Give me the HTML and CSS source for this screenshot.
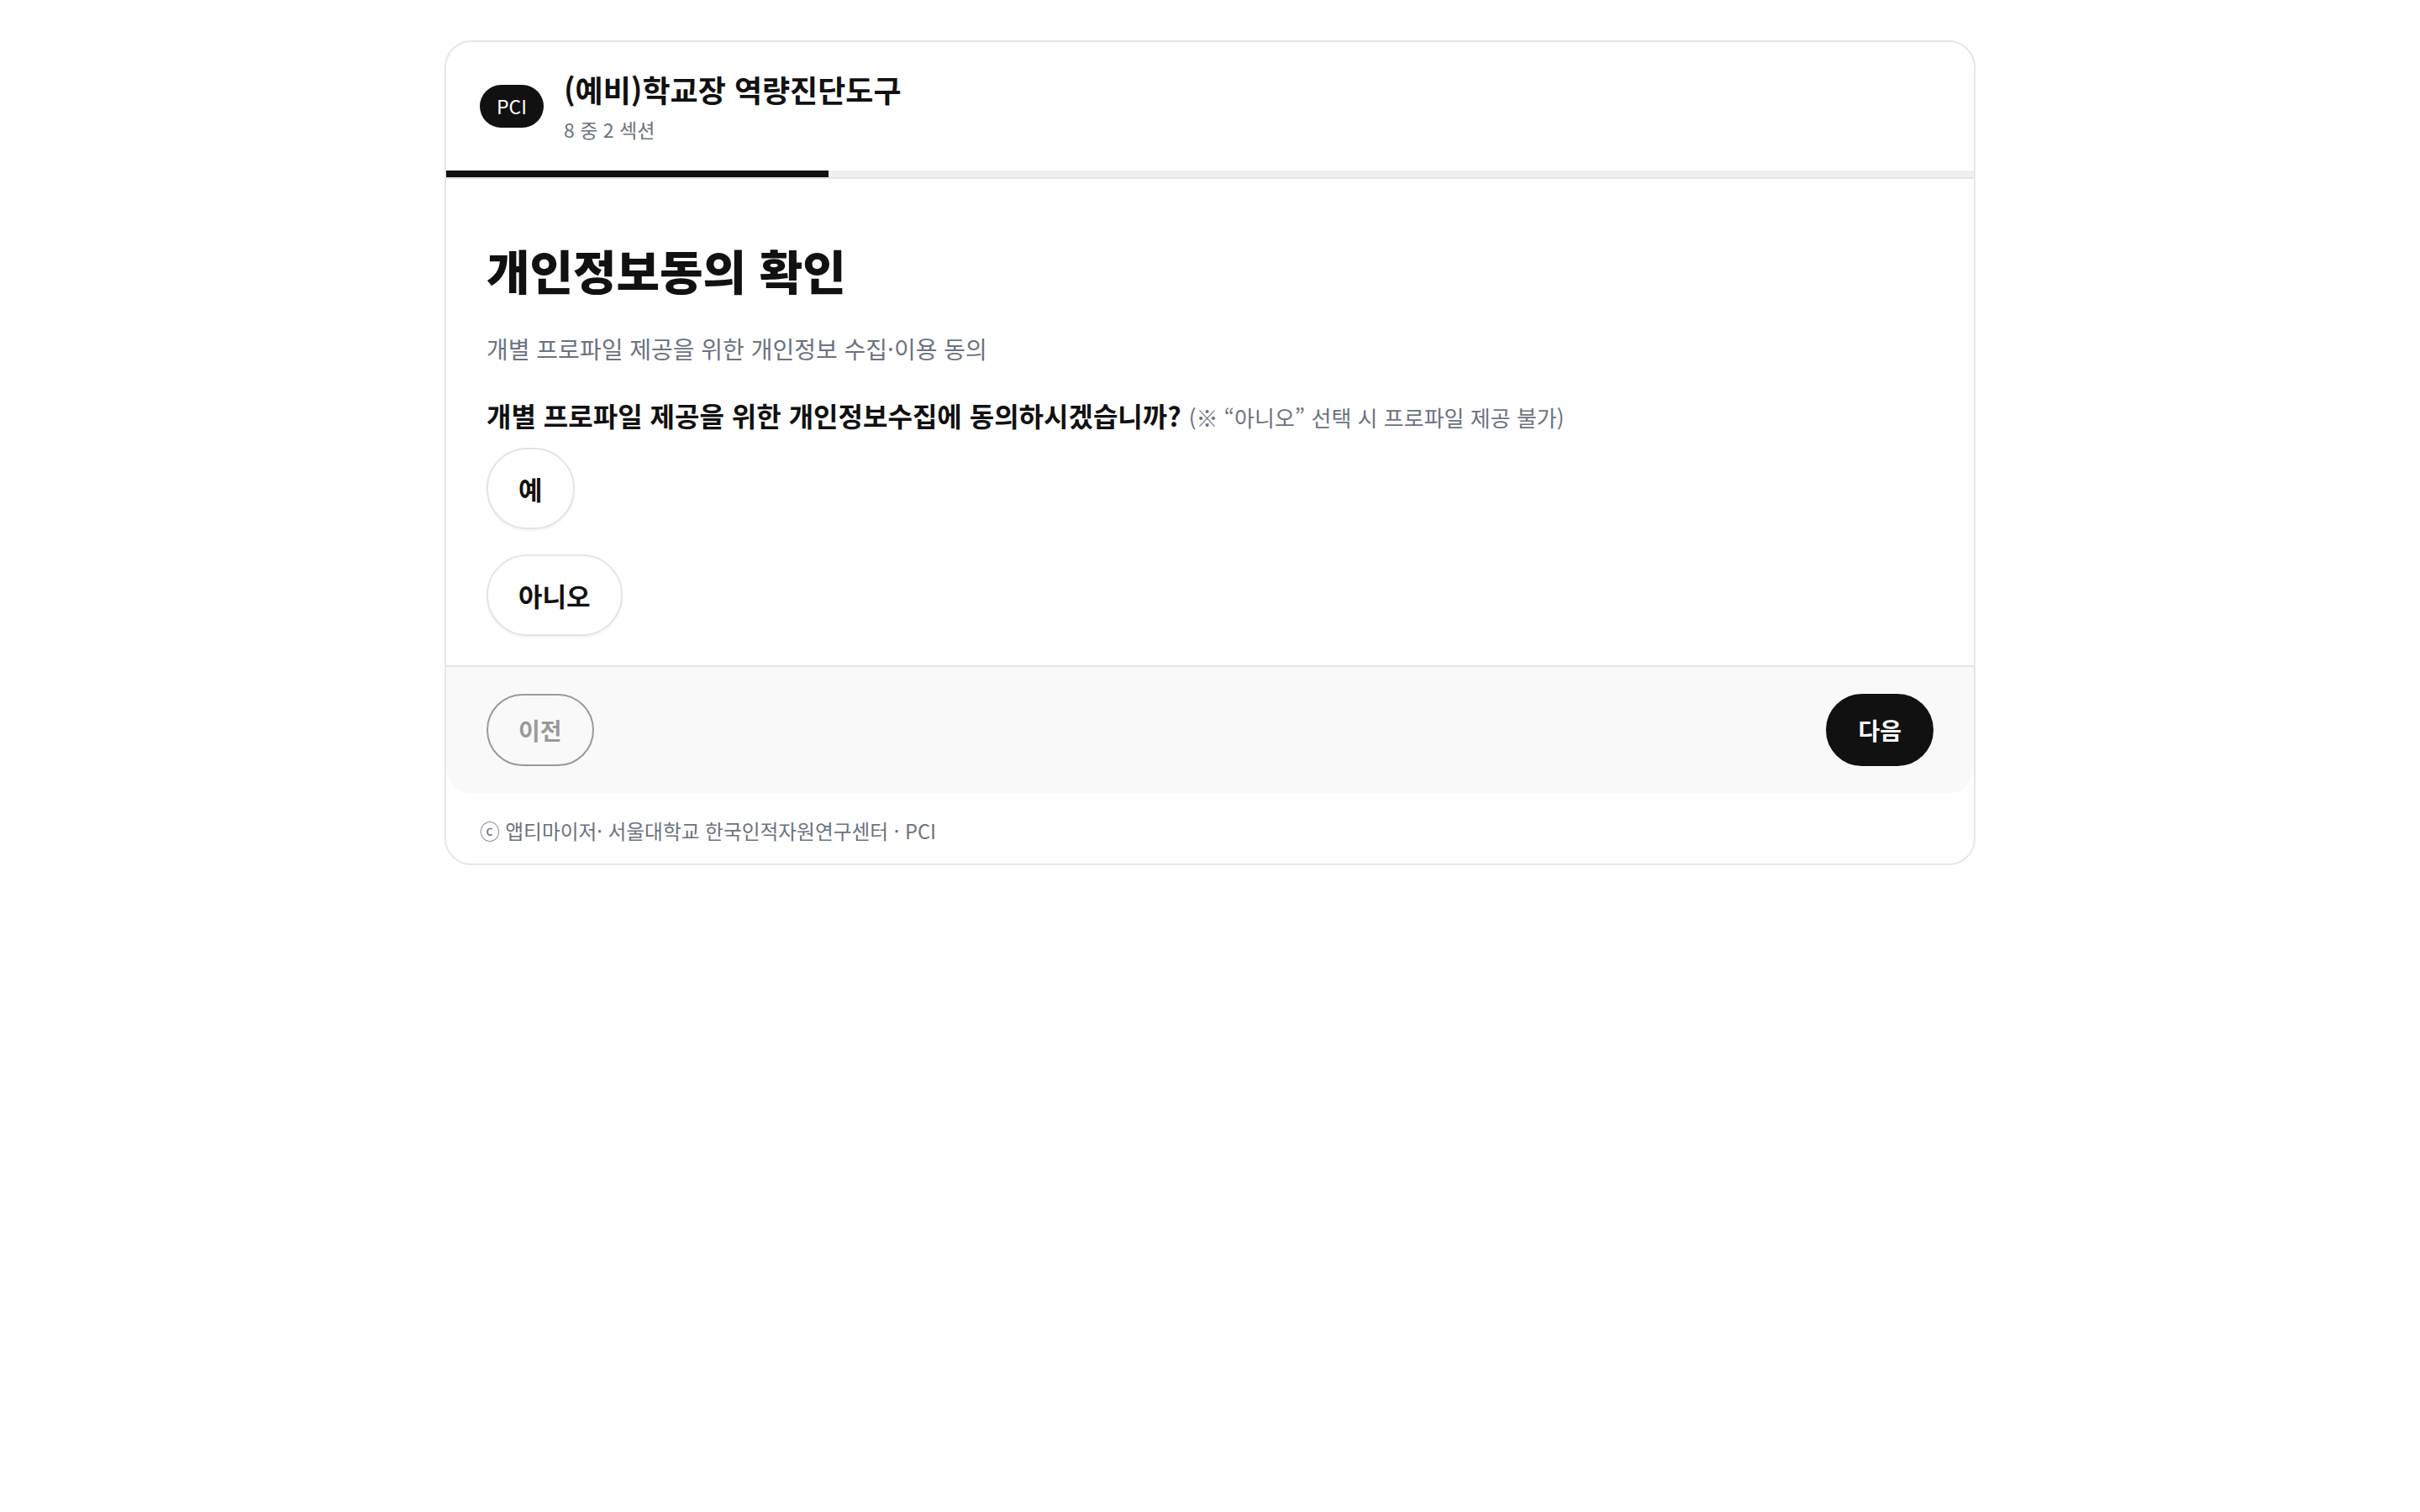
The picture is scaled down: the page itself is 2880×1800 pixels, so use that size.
FILE: index.html
```html
<!DOCTYPE html>
<html lang="ko">
<head>
    <meta charset="utf-8">
    <title>(예비)학교장 역량진단도구</title>
    <link rel="stylesheet" href="styles.css">
</head>
<body>
    <div class="card">
        <div class="header">
            <div class="badge">PCI</div>
            <div class="header-text">
                <h1>(예비)학교장 역량진단도구</h1>
                <p>8 중 2 섹션</p>
            </div>
        </div>

        <div class="progress">
            <div class="progress-fill" style="width: 25%"></div>
        </div>

        <div class="content">
            <h2>개인정보동의 확인</h2>
            <p class="section-desc">개별 프로파일 제공을 위한 개인정보 수집·이용 동의</p>

            <div class="question">
                개별 프로파일 제공을 위한 개인정보수집에 동의하시겠습니까?
                <span class="question-note">(※ “아니오” 선택 시 프로파일 제공 불가)</span>
            </div>

            <div class="options">
                <button class="option">예</button>
                <button class="option">아니오</button>
            </div>
        </div>

        <div class="nav">
            <button class="btn btn-prev">이전</button>
            <button class="btn btn-next">다음</button>
        </div>

        <div class="footer">ⓒ 앱티마이저· 서울대학교 한국인적자원연구센터 · PCI</div>
    </div>
</body>
</html>
```

FILE: styles.css
```css
* {
    box-sizing: border-box;
    margin: 0;
    padding: 0;
}

body {
    font-family: "Noto Sans CJK KR", "Noto Sans", sans-serif;
    background: #fff;
    color: #111;
}

.card {
    width: 1822px;
    margin: 48px auto;
    border: 2px solid #e6e6ea;
    border-radius: 32px;
    background: #fff;
    overflow: hidden;
}

.header {
    display: flex;
    align-items: center;
    gap: 24px;
    padding: 33px 40px;
}

.badge {
    background: #111;
    color: #fff;
    font-size: 23px;
    line-height: 51px;
    height: 51px;
    padding: 0 20px;
    border-radius: 26px;
}

.header h1 {
    font-size: 36px;
    font-weight: 700;
    line-height: 1.3;
}

.header p {
    font-size: 23px;
    line-height: 1.4;
    color: #6b7280;
    margin-top: 8px;
}

.progress {
    height: 8px;
    background: #efeff1;
    border-bottom: 2px solid #e6e6ea;
    box-sizing: content-box;
}

.progress-fill {
    height: 8px;
    background: #111;
}

.content {
    padding: 73px 48px 35px;
}

.content h2 {
    font-size: 56px;
    font-weight: 800;
    line-height: 70px;
}

.section-desc {
    font-size: 28px;
    line-height: 40px;
    color: #6b7280;
    margin-top: 39px;
}

.question {
    font-size: 32px;
    font-weight: 700;
    line-height: 45px;
    margin-top: 37px;
}

.question-note {
    font-size: 26px;
    font-weight: 400;
    color: #6b7280;
}

.options {
    display: flex;
    flex-direction: column;
    align-items: flex-start;
    gap: 30px;
    margin-top: 14px;
}

.option {
    font-family: inherit;
    font-size: 31px;
    font-weight: 700;
    line-height: 45px;
    color: #111;
    background: #fff;
    border: 2px solid #e4e4e8;
    border-radius: 50px;
    padding: 24px 36px;
    box-shadow: 0 2px 3px rgba(0, 0, 0, 0.05);
    cursor: pointer;
}

.nav {
    display: flex;
    justify-content: space-between;
    align-items: center;
    padding: 32px 48px 33px;
    background: #f9f9f9;
    border-top: 2px solid #e6e6ea;
    border-radius: 0 0 32px 32px;
}

.btn {
    font-family: inherit;
    font-size: 28px;
    font-weight: 700;
    line-height: 42px;
    padding: 20px 36px;
    border-radius: 44px;
    cursor: pointer;
}

.btn-prev {
    background: transparent;
    color: #999;
    border: 2px solid #9a9a9a;
}

.btn-next {
    background: #111;
    color: #fff;
    border: 2px solid #111;
}

.footer {
    font-size: 23.7px;
    line-height: 34px;
    color: #6b7280;
    padding: 27px 40px 22px;
}
```
